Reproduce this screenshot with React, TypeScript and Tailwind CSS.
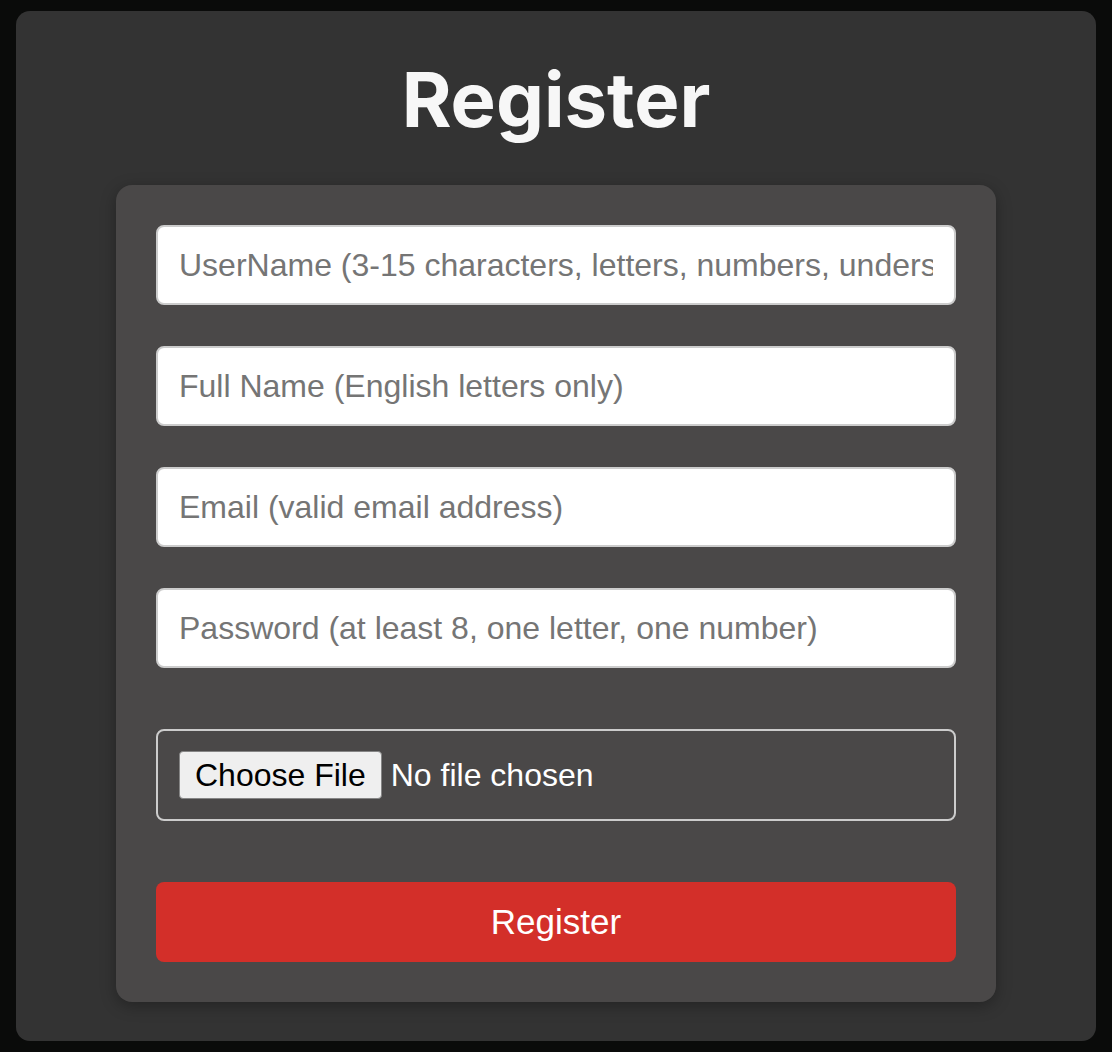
import React from 'react';

const fields = [
  'UserName (3-15 characters, letters, numbers, underscores)',
  'Full Name (English letters only)',
  'Email (valid email address)',
  'Password (at least 8, one letter, one number)',
];

export default function App() {
  return (
    <div className="min-h-[1052px] w-full bg-[#0a0b0a] px-4 py-[11px] font-['Liberation_Sans',Arial,sans-serif]">
      <div className="flex h-[1030px] flex-col items-center rounded-[14px] bg-[#333333] pt-[44px]">
        <h1 className="font-['Inter',sans-serif] text-[76px] font-bold leading-[88px] text-[#f7f7f7]">
          Register
        </h1>
        <form className="mt-[42px] flex w-[880px] flex-col rounded-[16px] bg-[#4a4848] p-10 shadow-[0_4px_16px_rgba(0,0,0,0.3)]">
          {fields.map((f, i) => (
            <input
              key={f}
              type={i === 3 ? 'password' : 'text'}
              placeholder={f}
              className={`h-20 w-full rounded-[8px] border-2 border-[#cccccc] bg-white px-[21px] text-[32px] text-black placeholder:text-[#757575] outline-none ${i > 0 ? 'mt-[41px]' : ''}`}
            />
          ))}
          <div className="mt-[61px] flex h-[92px] items-center rounded-[8px] border-2 border-[#cccccc] px-[21px]">
            <span className="flex h-[48px] items-center rounded-[4px] border border-[#858585] bg-[#efefef] px-[15px] text-[32px] text-black">
              Choose File
            </span>
            <span className="ml-[9px] text-[32px] text-white">No file chosen</span>
          </div>
          <button
            type="button"
            className="mt-[61px] h-20 w-full rounded-[8px] bg-[#d32f29] text-[35px] text-white"
          >
            Register
          </button>
        </form>
      </div>
    </div>
  );
}
